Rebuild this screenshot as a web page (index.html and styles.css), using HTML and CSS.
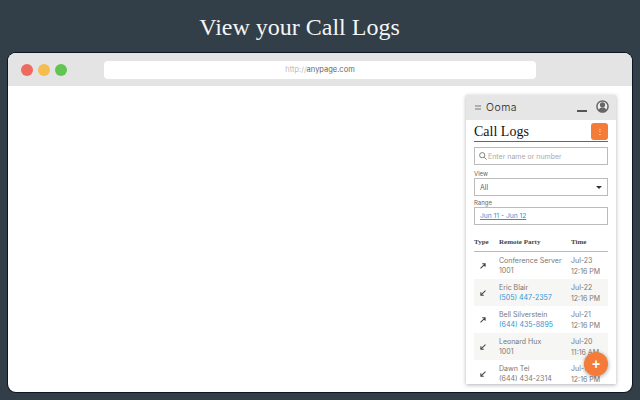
FILE: index.html
```html
<!DOCTYPE html>
<html lang="en">
<head>
  <meta charset="UTF-8">
  <title>View your Call Logs</title>
  <link rel="stylesheet" href="styles.css">
</head>
<body>

<h1 class="headline">View your Call Logs</h1>

<div class="window">
  <div class="window-bar">
    <div class="dots">
      <span class="dot dot-red"></span>
      <span class="dot dot-yellow"></span>
      <span class="dot dot-green"></span>
    </div>
    <div class="address"><span class="scheme">http://</span>anypage.com</div>
  </div>

  <div class="window-body">
    <div class="panel">
      <div class="panel-head">
        <svg class="menu-icon" width="6" height="5" viewBox="0 0 6 5"><path d="M0 1h6M0 4h6" stroke="#777" stroke-width="1"/></svg>
        <span class="brand">Ooma</span>
        <span class="minimize"></span>
        <svg class="avatar" width="13" height="13" viewBox="0 0 14 14">
          <circle cx="7" cy="7" r="6" fill="#eee" stroke="#666" stroke-width="1.600"/>
          <circle cx="7" cy="5.200" r="2.800" fill="#666"/>
          <path d="M2.600 11.200c1-2.400 2.600-3 4.400-3s3.400.6 4.400 3c-1.200 1.300-2.700 2-4.400 2s-3.200-.7-4.400-2z" fill="#666"/>
        </svg>
      </div>

      <div class="panel-body">
        <div class="title-row">
          <h2 class="panel-title">Call Logs</h2>
          <button class="kebab">⋮</button>
        </div>

        <div class="field search">
          <svg width="8" height="8" viewBox="0 0 8 8"><circle cx="3.200" cy="3.200" r="2.600" fill="none" stroke="#666" stroke-width=".8"/><path d="M5.100 5.100L7.600 7.600" stroke="#666" stroke-width=".8"/></svg>
          <span class="placeholder">Enter name or number</span>
        </div>

        <div class="label label-view">View</div>
        <div class="field select">
          <span>All</span>
          <span class="caret"></span>
        </div>

        <div class="label label-range">Range</div>
        <div class="field range"><a class="link">Jun 11 - Jun 12</a></div>

        <div class="log-head">
          <span class="col-type">Type</span>
          <span class="col-party">Remote Party</span>
          <span class="col-time">Time</span>
        </div>

        <div class="log-row">
          <span class="col-type"><svg class="arrow" width="6" height="6" viewBox="0 0 7 7"><path d="M.6 6.400L5.400 1.600M2.600 1h3.400v3.400" fill="none" stroke="#444" stroke-width="1.200"/></svg></span>
          <span class="col-party">Conference Server<br>1001</span>
          <span class="col-time">Jul-23<br>12:16 PM</span>
        </div>
        <div class="log-row shaded">
          <span class="col-type"><svg class="arrow" width="6" height="6" viewBox="0 0 7 7"><path d="M6.400.6L1.600 5.400M1 2.600v3.400h3.400" fill="none" stroke="#444" stroke-width="1.200"/></svg></span>
          <span class="col-party">Eric Blair<br><a class="link">(505) 447-2357</a></span>
          <span class="col-time">Jul-22<br>12:16 PM</span>
        </div>
        <div class="log-row">
          <span class="col-type"><svg class="arrow" width="6" height="6" viewBox="0 0 7 7"><path d="M.6 6.400L5.400 1.600M2.600 1h3.400v3.400" fill="none" stroke="#444" stroke-width="1.200"/></svg></span>
          <span class="col-party">Bell Silverstein<br><a class="link">(644) 435-8895</a></span>
          <span class="col-time">Jul-21<br>12:16 PM</span>
        </div>
        <div class="log-row shaded">
          <span class="col-type"><svg class="arrow" width="6" height="6" viewBox="0 0 7 7"><path d="M6.400.6L1.600 5.400M1 2.600v3.400h3.400" fill="none" stroke="#444" stroke-width="1.200"/></svg></span>
          <span class="col-party">Leonard Hux<br>1001</span>
          <span class="col-time">Jul-20<br>11:16 AM</span>
        </div>
        <div class="log-row">
          <span class="col-type"><svg class="arrow" width="6" height="6" viewBox="0 0 7 7"><path d="M6.400.6L1.600 5.400M1 2.600v3.400h3.400" fill="none" stroke="#444" stroke-width="1.200"/></svg></span>
          <span class="col-party">Dawn Tei<br>(644) 434-2314</span>
          <span class="col-time">Jul-19<br>12:16 PM</span>
        </div>
      </div>

      <button class="fab">+</button>
    </div>
  </div>
</div>

</body>
</html>
```

FILE: styles.css
```css
html, body { margin: 0; height: 400px; overflow: hidden; }
body {
  background: #323e48;
  font-family: "Inter", "Liberation Sans", sans-serif;
  display: flex;
  flex-direction: column;
}
.headline {
  margin: 0;
  height: 53px;
  line-height: 54px;
  text-align: center;
  font-family: "Liberation Serif", serif;
  font-weight: normal;
  font-size: 24px;
  color: #f4f6f6;
  padding-right: 41px;
}

/* browser mock */
.window {
  margin: 0 8px;
  height: 339px;
  background: #fff;
  border-radius: 8px;
  box-shadow: 0 0 0 1px #0b1524;
  overflow: hidden;
  display: flex;
  flex-direction: column;
}
.window-bar {
  height: 33px;
  flex: none;
  background: #e4e4e4;
  display: flex;
  align-items: center;
  padding-left: 13px;
  padding-right: 96px;
}
.dots { display: flex; gap: 5px; width: 83px; flex: none; }
.dot { width: 12px; height: 12px; border-radius: 50%; }
.dot-red { background: #ee6a5f; }
.dot-yellow { background: #f5bd4f; }
.dot-green { background: #61c554; }
.address {
  flex: 1;
  height: 18px;
  line-height: 18px;
  background: #fff;
  border-radius: 4px;
  text-align: center;
  font-size: 7.500px;
  color: #666;
}
.scheme { color: #bbb; }

.window-body {
  flex: 1;
  display: flex;
  justify-content: flex-end;
  padding: 9px 16px 8px 0;
  min-height: 0;
}

/* extension panel */
.panel {
  position: relative;
  width: 150px;
  background: #fff;
  box-shadow: 0 1px 4px rgba(0,0,0,0.3);
  overflow: hidden;
}
.panel-head {
  height: 25px;
  background: #e6e6e6;
  display: flex;
  align-items: center;
  padding: 0 7px 0 9px;
}
.brand { font-size: 10.500px; font-weight: 300; color: #222; margin-left: 5px; flex: 1; letter-spacing: .5px; }
.minimize { width: 10px; height: 2px; background: #555; margin-top: 7px; margin-right: 9px; }
.avatar { margin-top: -2px; }
.panel-body { padding: 0 8px; }
.title-row {
  height: 19px;
  padding-top: 2px;
  display: flex;
  align-items: center;
  justify-content: space-between;
  border-bottom: 1px solid #666;
}
.panel-title {
  margin: 0;
  font-family: "Liberation Serif", serif;
  font-weight: normal;
  font-size: 14px;
  color: #111;
}
.kebab {
  width: 17px;
  height: 17px;
  padding: 0;
  border: none;
  border-radius: 3px;
  background: #f47b38;
  color: #fff;
  font-size: 8px;
  line-height: 17px;
}
.field {
  box-sizing: border-box;
  border: 1px solid #bbb;
  display: flex;
  align-items: center;
  font-size: 7px;
  color: #666;
}
.search { height: 18px; margin-top: 5px; padding-left: 4px; gap: 1px; }
.placeholder { color: #aaa; }
.label { font-size: 6px; color: #666; height: 8px; line-height: 8px; }
.label-view { margin-top: 5px; }
.label-range { margin-top: 3px; }
.select { height: 18px; padding: 0 5px; justify-content: space-between; }
.caret {
  width: 0;
  height: 0;
  border-left: 3px solid transparent;
  border-right: 3px solid transparent;
  border-top: 3px solid #333;
}
.range { height: 18px; padding-left: 5px; font-size: 6.700px; }
.link { color: #2a96d4; }
.range .link { text-decoration: underline; }

.log-head, .log-row { display: flex; }
.col-type { width: 25px; flex: none; }
.col-party { width: 72px; flex: none; }
.col-time { flex: 1; }
.log-head {
  margin-top: 12px;
  height: 14px;
  line-height: 10px;
  border-bottom: 1px solid #bbb;
  font-family: "Liberation Serif", serif;
  font-size: 7px;
  font-weight: bold;
  color: #444;
}
.log-row {
  height: 27px;
  align-items: center;
  font-size: 7px;
  line-height: 10px;
  color: #777;
}
.log-row .col-type { padding-left: 6px; width: 19px; display: flex; }
.log-row .col-time { line-height: 11px; }
.shaded { background: #f6f6f4; }

.fab {
  position: absolute;
  right: 8px;
  bottom: 8px;
  width: 24px;
  height: 24px;
  padding: 0;
  border: none;
  border-radius: 50%;
  background: #f47b38;
  color: #fff;
  font-size: 14px;
  font-weight: bold;
  line-height: 24px;
  box-shadow: 0 1px 4px rgba(0,0,0,0.4);
}
```
